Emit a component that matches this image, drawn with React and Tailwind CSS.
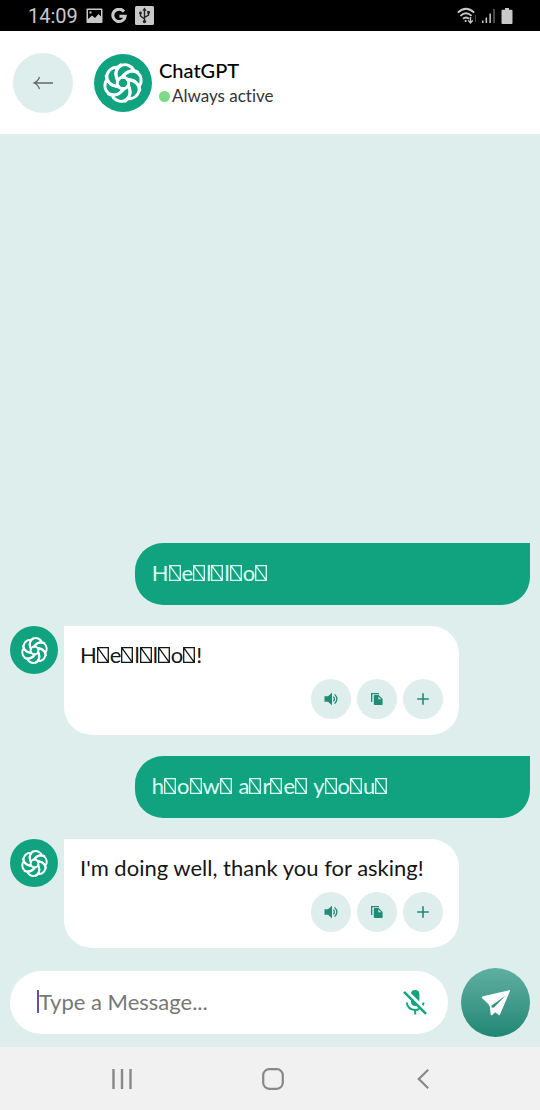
import React from "react";

function Logo({ className }) {
  const turns = [0, 60, 120, 180, 240, 300];
  return (
    <svg viewBox="-20 -20 40 40" className={className} fill="none" stroke="currentColor" strokeWidth="2.9" strokeLinejoin="round" strokeLinecap="round" aria-hidden="true">
      <circle r="5.8" />
      {turns.map((a) => (
        <path key={a} transform={`rotate(${a})`} d="M-5 -2.9C-7.6 -6.4 -7.8 -9.6 -6.4 -12.6C-4 -18 1.4 -19.6 6 -17.4C8.6 -16.2 10.2 -14.4 11 -12M-1 -5.8C1.6 -9.2 5.4 -11.6 9.2 -12.2C11.4 -12.5 13 -12 14.6 -11" />
      ))}
    </svg>
  );
}

/* Box shown in place of a character the font has no glyph for */
function Missing() {
  return (
    <svg viewBox="0 0 12 16" className="mr-px inline-block h-4 w-3 align-baseline" fill="none" stroke="currentColor" strokeWidth="1.3" aria-hidden="true">
      <path d="M.7 .7H11.3V15.3H.7ZM.7 .7L11.3 15.3" />
    </svg>
  );
}

function Spaced({ text }) {
  return text.split("").map((c, i) => (
    <React.Fragment key={i}>
      {c}
      {/[a-z]/i.test(c) && <Missing />}
    </React.Fragment>
  ));
}

function Speaker() {
  return (
    <svg viewBox="0 0 14 14" className="size-[14px]" fill="none" stroke="currentColor" aria-hidden="true">
      <path d="M.5 4.2H4L8 .8V13.2L4 9.8H.5Z" fill="currentColor" stroke="none" />
      <path d="M9.4 4.6Q11.4 7 9.4 9.4M10.6 2.4Q15.2 7 10.6 11.6" strokeWidth="1.3" />
    </svg>
  );
}

function Copy() {
  return (
    <svg viewBox="0 0 14 14" className="size-[14px]" fill="currentColor" aria-hidden="true">
      <path d="M1 1H9V2.3H2.3V10H1Z" />
      <path fillRule="evenodd" d="M4.6 3H8.6L12.6 7V12.2Q12.6 13 11.8 13H4.6Q3.8 13 3.8 12.2V3.8Q3.8 3 4.6 3ZM8.4 4.4V7.2H11.2Z" />
    </svg>
  );
}

function Plus() {
  return (
    <svg viewBox="0 0 14 14" className="size-[14px]" fill="none" stroke="currentColor" strokeWidth="1.6" aria-hidden="true">
      <path d="M7 1.2V12.8M1.2 7H12.8" />
    </svg>
  );
}

function Action({ label, children }) {
  return (
    <button aria-label={label} className="flex size-10 items-center justify-center rounded-full bg-[#deeeec] text-[#218b78]">
      {children}
    </button>
  );
}

function UserMessage({ children }) {
  return (
    <div className="ml-auto w-[76%] rounded-[28px] rounded-tr-none bg-[#11a37f] px-[17px] pt-[15px] pb-[17px] text-[22px] leading-[30px] text-[#dcfff5]">
      {children}
    </div>
  );
}

function BotMessage({ children }) {
  return (
    <div className="flex items-start gap-[6px]">
      <div className="flex size-12 shrink-0 items-center justify-center rounded-full bg-[#11a37f] text-white">
        <Logo className="size-[27px]" />
      </div>
      <div className="w-[76%] rounded-[28px] rounded-tl-none bg-white px-4 pt-[14px] pb-4 text-[22px] text-[#161616]">
        <p className="leading-[29px]">{children}</p>
        <div className="mt-[10px] flex justify-end gap-[6px]">
          <Action label="Read aloud"><Speaker /></Action>
          <Action label="Copy"><Copy /></Action>
          <Action label="Add"><Plus /></Action>
        </div>
      </div>
    </div>
  );
}

function StatusBar() {
  return (
    <div className="flex h-[31px] items-center justify-between bg-black pr-[27px] pl-7 text-[#c9c9c9]">
      <div className="flex items-center gap-2">
        <span className="font-['Roboto',sans-serif] text-xl leading-6">14:09</span>
        <svg viewBox="0 0 17 16" className="h-4 w-[17px]" aria-hidden="true">
          <path fill="currentColor" fillRule="evenodd" d="M1.5 .5H15.5Q16.5 .5 16.5 1.5V14Q16.5 15 15.5 15H1.5Q.5 15 .5 14V1.5Q.5 .5 1.5 .5ZM2 2V11L6 7.5L9 10L12.5 6L15 8.5V2ZM3.5 3.5H5.5V5.5H3.5Z" />
        </svg>
        <svg viewBox="0 0 16 16" className="size-4" fill="none" stroke="currentColor" strokeWidth="3" aria-hidden="true">
          <path d="M13 3.6A6.2 6.2 0 1 0 14.2 8.2H8.4" />
        </svg>
        <svg viewBox="0 0 19 19" className="size-[19px]" aria-hidden="true">
          <rect width="19" height="19" rx="1.5" fill="currentColor" />
          <path d="M9.5 3V15M9.5 13L5.5 10V7M9.5 11.5L13.5 9V6" fill="none" stroke="#222" strokeWidth="1.4" />
          <path d="M9.5 1.6L11.6 4.8H7.4Z" fill="#222" />
          <circle cx="9.5" cy="15.6" r="1.7" fill="#222" />
          <circle cx="5.5" cy="7" r="1.4" fill="#222" />
          <path d="M12.2 5H14.8V7.6H12.2Z" fill="#222" />
        </svg>
      </div>
      <div className="flex items-center gap-1">
        <svg viewBox="0 0 20 18" className="h-[18px] w-5" fill="none" stroke="currentColor" strokeWidth="1.8" aria-hidden="true">
          <path d="M.8 5.6Q9 -2.2 17.2 5.6M3.4 8.8Q9 3.6 14.6 8.8M6 11.8Q9 9.2 12 11.8" />
          <circle cx="8.6" cy="14" r="1.1" fill="currentColor" stroke="none" />
          <path d="M13.5 10V15.5M11.2 13.4L13.5 16L15.8 13.4" strokeWidth="1.4" />
          <path d="M18.5 8V15" stroke="#444" strokeWidth="1" />
        </svg>
        <svg viewBox="0 0 16 16" className="size-4" aria-hidden="true">
          <path d="M1 12.5H2.5V15H1ZM4.6 9.5H6.1V15H4.6ZM8.4 5.5H9.9V15H8.4Z" fill="currentColor" />
          <path d="M12.4 1H13.6V15H12.4Z" fill="#777" />
        </svg>
        <svg viewBox="0 0 12 16" className="h-4 w-3" fill="currentColor" aria-hidden="true">
          <path d="M4 0H8V1.8H10.5Q11.5 1.8 11.5 2.8V15Q11.5 16 10.5 16H1.5Q.5 16 .5 15V2.8Q.5 1.8 1.5 1.8H4Z" />
        </svg>
      </div>
    </div>
  );
}

export default function App() {
  return (
    <div className="flex min-h-screen flex-col bg-[#deeeed] font-['Lato',sans-serif] [font-variant-ligatures:none]">
      <StatusBar />

      <header className="flex items-center bg-white px-[13px] pt-[22px] pb-[21px]">
        <button aria-label="Back" className="flex size-[60px] items-center justify-center rounded-full bg-[#deeeed] text-[#666]">
          <svg viewBox="0 0 20 14" className="h-[14px] w-5" fill="none" stroke="currentColor" strokeWidth="1.3" aria-hidden="true">
            <path d="M20 7H1M6.5 1Q5 5.6 .8 7Q5 8.4 6.5 13" />
          </svg>
        </button>
        <div className="ml-[21px] flex size-[58px] items-center justify-center rounded-full bg-[#11a37f] text-white">
          <Logo className="size-10" />
        </div>
        <div className="ml-[7px]">
          <h1 className="text-xl leading-[26px] font-medium text-black">ChatGPT</h1>
          <p className="flex items-center gap-[2px] text-[17px] leading-[26px] text-[#333]">
            <span className="size-[11px] rounded-full bg-[#7ddb86]" />
            Always active
          </p>
        </div>
      </header>

      <main className="flex flex-1 flex-col justify-end gap-[21px] px-[10px] pb-5">
        <UserMessage><Spaced text="Hello" /></UserMessage>
        <BotMessage><Spaced text="Hello" />!</BotMessage>
        <UserMessage><Spaced text="how are you" /></UserMessage>
        <BotMessage>I'm doing well, thank you for asking!</BotMessage>
      </main>

      <form className="flex items-center gap-[13px] px-[10px] pb-[10px]" onSubmit={(e) => e.preventDefault()}>
        <div className="flex h-[63px] min-w-0 flex-1 items-center rounded-full bg-white pr-5 pb-[2px] pl-[27px]">
          <span className="h-[23px] w-[2px] shrink-0 bg-[#6750a4]" />
          <input type="text" aria-label="Message" placeholder="Type a Message..." className="min-w-0 flex-1 bg-transparent text-[22px] leading-8 text-black outline-none placeholder:text-[#777]" />
          <button type="button" aria-label="Voice input" className="text-[#11a37f]">
            <svg viewBox="0 0 26 28" className="h-7 w-[26px]" fill="none" stroke="currentColor" strokeWidth="2" aria-hidden="true">
              <path d="M9 6.2Q9 2 13.2 2Q17.4 2 17.4 6.2V13.6L9 5.2Z" fill="currentColor" stroke="none" />
              <path d="M9 9.8L16 16.8Q14.8 18 13.2 18Q9 18 9 13.8Z" fill="currentColor" stroke="none" />
              <path d="M4.8 14.5Q5.6 21.6 13.2 22Q15.4 21.9 17.2 20.8M21.6 14.5Q21.4 16 20.7 17.2M13.2 22V26.6" />
              <path d="M2 3.8L24 25.8" strokeWidth="2.4" />
            </svg>
          </button>
        </div>
        <button type="submit" aria-label="Send" className="flex size-[69px] shrink-0 items-center justify-center rounded-full bg-linear-to-b from-[#5eafa2] to-[#1f8775] text-white">
          <svg viewBox="0 0 30 28" className="h-7 w-[30px]" fill="currentColor" aria-hidden="true">
            <path d="M28.2 1.2Q29.3 .8 29 2L19 25.6Q18.6 26.6 17.8 26L14.2 23.2L11.2 26Q10 26.8 9.6 25.2L9 18.6L7.8 15.6L1.2 9.2Q.2 7.8 2 7.2Z" />
            <path d="M10.4 16.8L24.6 6.6L13 18.4L10.8 18.8Z" fill="#35907f" />
          </svg>
        </button>
      </form>

      <nav className="grid h-[63px] grid-cols-[1fr_66px_1fr] items-center bg-[#f1f1f1] pl-[5px] text-[#888]">
        <button aria-label="Recent apps" className="flex justify-center">
          <svg viewBox="0 0 20 20" className="size-5" fill="none" stroke="currentColor" strokeWidth="2.4" aria-hidden="true">
            <path d="M1.5 0V20M10 0V20M18.5 0V20" />
          </svg>
        </button>
        <button aria-label="Home" className="flex justify-center">
          <svg viewBox="0 0 22 22" className="size-[22px]" fill="none" stroke="currentColor" strokeWidth="2.2" aria-hidden="true">
            <rect x="1.2" y="1.2" width="19.6" height="19.6" rx="6" />
          </svg>
        </button>
        <button aria-label="Back" className="flex justify-center">
          <svg viewBox="0 0 12 20" className="h-5 w-3" fill="none" stroke="currentColor" strokeWidth="2.2" aria-hidden="true">
            <path d="M11.2 .8L1.8 10L11.2 19.2" />
          </svg>
        </button>
      </nav>
    </div>
  );
}
